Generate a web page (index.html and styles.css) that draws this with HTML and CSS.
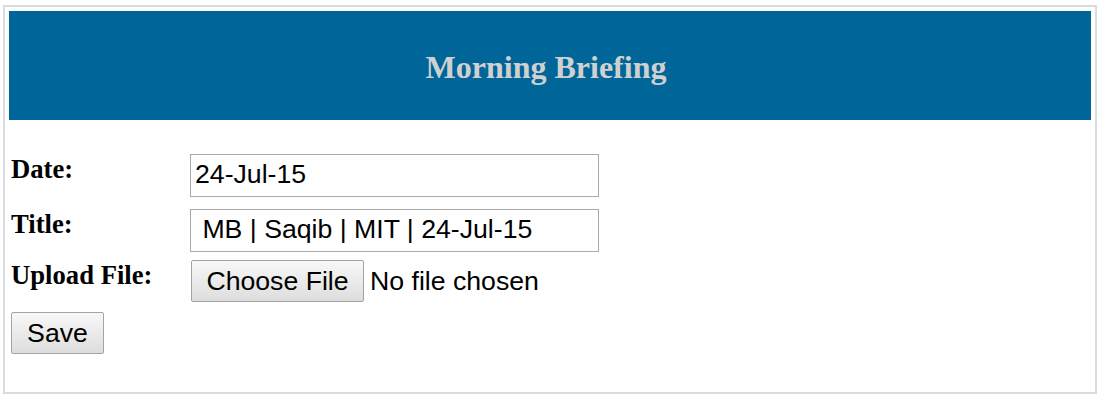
FILE: index.html
```html
<!DOCTYPE html>
<html>
<head>
<meta charset="utf-8">
<title>Morning Briefing</title>
<link rel="stylesheet" href="styles.css">
</head>
<body>
<div class="panel">
  <div class="header"><h1 class="title">Morning Briefing</h1></div>
  <form class="form">
    <div class="row row-date">
      <label class="label">Date:</label>
      <input class="field" type="text" value="24-Jul-15">
    </div>
    <div class="row row-title">
      <label class="label">Title:</label>
      <input class="field" type="text" value=" MB | Saqib | MIT | 24-Jul-15">
    </div>
    <div class="row row-file">
      <label class="label">Upload File:</label>
      <div class="file">
        <button type="button" class="btn btn-file">Choose File</button>
        <span class="file-name">No file chosen</span>
      </div>
    </div>
    <div class="row row-save">
      <button type="button" class="btn btn-save">Save</button>
    </div>
  </form>
</div>
</body>
</html>
```

FILE: styles.css
```css
html, body {
  margin: 0;
  padding: 0;
  background: #ffffff;
}

body {
  padding: 5px 0 0 3px;
}

.panel {
  box-sizing: border-box;
  width: 1094px;
  height: 389px;
  border: 2px solid #d7dbe2;
  padding: 4px;
}

.header {
  height: 109px;
  background: #006699;
  display: flex;
  align-items: center;
  justify-content: center;
}

.title {
  margin: 0;
  padding: 4px 8px 0 0;
  font-family: "Liberation Serif", "Times New Roman", serif;
  font-weight: bold;
  font-size: 32px;
  color: #d0d0d0;
}

.form {
  padding-left: 2px;
}

.row {
  display: flex;
  align-items: flex-start;
}

.row-date { margin-top: 34px; }
.row-title { margin-top: 12px; }
.row-file { margin-top: 8px; }
.row-save { margin-top: 10px; }

.label {
  width: 179px;
  flex: none;
  font-family: "Liberation Serif", "Times New Roman", serif;
  font-weight: bold;
  font-size: 26.67px;
  color: #000;
  line-height: 30px;
}

.field {
  box-sizing: border-box;
  width: 409px;
  height: 43px;
  margin: 0;
  border: 1px solid #a9a9a9;
  padding: 0 5px 2px 4px;
  font-family: "Liberation Sans", Arial, sans-serif;
  font-size: 26.67px;
  color: #000;
  outline: none;
}

.file {
  display: flex;
  align-items: center;
  margin-left: 1px;
}

.btn {
  box-sizing: border-box;
  height: 42px;
  margin: 0;
  border: 1px solid #a3a3a3;
  border-radius: 2px;
  background: linear-gradient(#f8f8f8, #dddddd);
  font-family: "Liberation Sans", Arial, sans-serif;
  font-size: 26.67px;
  color: #000;
  padding: 0 14px;
  line-height: 38px;
}

.btn-file {
  width: 173px;
}

.btn-save {
  width: 93px;
  padding: 0;
}

.file-name {
  margin-left: 6px;
  font-family: "Liberation Sans", Arial, sans-serif;
  font-size: 26.67px;
  color: #000;
}
```
